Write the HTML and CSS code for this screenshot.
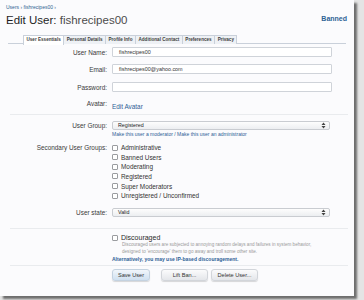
FILE: index.html
```html
<!DOCTYPE html>
<html>
<head>
<meta charset="utf-8">
<link rel="stylesheet" href="styles.css">
</head>
<body>
<div class="page">
  <div class="crumbs"><a>Users</a> › <a>fishrecipes00</a> ›</div>
  <div class="titlebar">
    <h1>Edit User: <span class="uname">fishrecipes00</span></h1>
    <a class="banned">Banned</a>
  </div>
  <div class="tabs">
    <span class="tab active">User Essentials</span>
    <span class="tab">Personal Details</span>
    <span class="tab">Profile Info</span>
    <span class="tab">Additional Contact</span>
    <span class="tab">Preferences</span>
    <span class="tab">Privacy</span>
  </div>

  <div class="form">
    <div class="row r-input"><label class="lbl">User Name:</label><div class="ctrl"><div class="input">fishrecipes00</div></div></div>
    <div class="row r-input"><label class="lbl">Email:</label><div class="ctrl"><div class="input">fishrecipes00@yahoo.com</div></div></div>
    <div class="row r-input"><label class="lbl">Password:</label><div class="ctrl"><div class="input"></div></div></div>
    <div class="row r-avatar"><label class="lbl">Avatar:</label><div class="ctrl"><a class="link big">Edit Avatar</a></div></div>
    <hr class="sep sep1">
    <div class="row r-group"><label class="lbl">User Group:</label>
      <div class="ctrl">
        <div class="select">Registered<svg class="arr" width="5" height="7" viewBox="0 0 5 7"><path d="M2.5 0.5 L4.5 3 L0.5 3 Z M2.5 6.5 L4.5 4 L0.5 4 Z" fill="#444"/></svg></div>
        <a class="link small mk">Make this user a moderator / Make this user an administrator</a>
      </div>
    </div>
    <div class="row r-sec"><label class="lbl">Secondary User Groups:</label>
      <div class="ctrl checks">
        <div class="chk"><span class="box"></span>Administrative</div>
        <div class="chk"><span class="box"></span>Banned Users</div>
        <div class="chk"><span class="box"></span>Moderating</div>
        <div class="chk"><span class="box"></span>Registered</div>
        <div class="chk"><span class="box"></span>Super Moderators</div>
        <div class="chk"><span class="box"></span>Unregistered / Unconfirmed</div>
      </div>
    </div>
    <div class="row r-state"><label class="lbl">User state:</label>
      <div class="ctrl"><div class="select">Valid<svg class="arr" width="5" height="7" viewBox="0 0 5 7"><path d="M2.5 0.5 L4.5 3 L0.5 3 Z M2.5 6.5 L4.5 4 L0.5 4 Z" fill="#444"/></svg></div></div>
    </div>
    <hr class="sep sep2">
    <div class="row r-disc"><span class="lbl"></span>
      <div class="ctrl">
        <div class="chk disc"><span class="box"></span>Discouraged</div>
        <p class="desc">Discouraged users are subjected to annoying random delays and failures in system behavior,<br>designed to 'encourage' them to go away and troll some other site.</p>
        <a class="link small alt">Alternatively, you may use IP-based discouragement.</a>
      </div>
    </div>
    <hr class="sep sep3">
    <div class="row r-btn"><span class="lbl"></span>
      <div class="ctrl buttons">
        <span class="btn primary">Save User</span>
        <span class="btn lift">Lift Ban...</span>
        <span class="btn del">Delete User...</span>
      </div>
    </div>
  </div>
</div>
</body>
</html>
```

FILE: styles.css
```css
* { box-sizing: border-box; }
html, body { margin: 0; padding: 0; }
body {
  background: #e4e4e4;
  font-family: "Liberation Sans", Arial, sans-serif;
  color: #333;
  width: 364px;
  height: 300px;
  overflow: hidden;
}
.page {
  width: 354px;
  height: 296px;
  background: #fbfbfd;
  box-shadow: 3px 3px 2px #6e6e6e;
  padding: 4px 0 0 0;
}
a { color: #2e5f91; text-decoration: none; }
.crumbs {
  font-size: 5px;
  color: #4a6a90;
  padding-left: 6px;
  height: 6px;
  line-height: 6px;
}
.titlebar {
  display: flex;
  justify-content: space-between;
  align-items: center;
  padding: 0 7px 0 6px;
  height: 17px;
  margin-top: 1px;
}
h1 {
  margin: 0;
  font-size: 11.5px;
  font-weight: normal;
  color: #1f1f1f;
  line-height: 14px;
}
.uname { color: #4c4c4c; }
.banned {
  font-size: 7px;
  font-weight: bold;
  color: #2f6395;
  margin-top: -3px;
}
.tabs {
  display: flex;
  margin: 7px 8px 0 8px;
  padding-left: 15px;
  border-bottom: 1px solid #c9d0da;
  height: 9px;
}
.tab {
  font-size: 4.6px;
  font-weight: bold;
  color: #3d3d3d;
  padding: 0 2.5px;
  height: 9px;
  line-height: 8px;
  background: #eef1f5;
  border: 1px solid #c9d0da;
  border-left: none;
  border-bottom: none;
  white-space: nowrap;
}
.tab:first-child { border-left: 1px solid #c9d0da; }
.tab.active { background: #fff; height: 10px; }

.form { margin-top: 3px; }
.row {
  display: grid;
  grid-template-columns: 107px 220px;
  column-gap: 5px;
}
.lbl {
  text-align: right;
  font-size: 6.4px;
  color: #3a3a3a;
}
.r-input { height: 17.3px; align-items: start; }
.r-input .lbl { line-height: 11px; }
.input {
  height: 10px;
  background: #fff;
  border: 1px solid #cfd3d9;
  border-radius: 1px;
  font-size: 5.4px;
  line-height: 8px;
  padding-left: 6px;
  color: #333;
}
.r-avatar { height: 12px; }
.r-avatar .lbl, .r-avatar .ctrl { line-height: 9px; }
.link.big { font-size: 6.4px; color: #2e6196; }
.sep {
  border: none;
  border-top: 1px solid #e9ebee;
  margin: 0 6px 0 10px;
  height: 0;
}
.sep1 { margin-top: 3px; margin-bottom: 6px; }
.r-group { margin-top: 1px; }
.r-group .lbl { line-height: 10px; }
.select {
  position: relative;
  width: 218px;
  height: 9px;
  background: linear-gradient(#fdfdfd, #eceef1);
  border: 1px solid #c9ccd1;
  border-radius: 2px;
  font-size: 5.3px;
  line-height: 7px;
  padding-left: 5px;
  color: #222;
}
.arr { position: absolute; right: 3px; top: 0; }
.link.small { font-size: 5px; color: #2e6196; display: block; }
.mk { line-height: 9px; margin-top: 0px; }
.r-sec { margin-top: 4px; }
.r-sec .lbl { line-height: 9px; }
.checks { display: flex; flex-direction: column; }
.chk {
  display: flex;
  align-items: center;
  font-size: 6.4px;
  color: #333;
  height: 9.6px;
}
.box {
  width: 6px;
  height: 6px;
  border: 1px solid #9a9ca0;
  border-radius: 1px;
  background: #fff;
  margin-right: 3px;
}
.r-state { margin-top: 8px; }
.r-state .lbl { line-height: 10px; }
.sep2 { margin-top: 10px; margin-bottom: 4px; }
.disc { font-size: 7px; color: #2a2a2a; height: 9px; }
.desc {
  margin: 0 0 0 10px;
  font-size: 4.6px;
  line-height: 6.5px;
  color: #9a9a9a;
}
.alt { font-size: 5px; font-weight: bold; line-height: 8px; margin-top: 0; }
.sep3 { margin-top: 2px; margin-bottom: 3px; }
.buttons { display: flex; gap: 3px; }
.btn {
  height: 12px;
  font-size: 5.6px;
  line-height: 11px;
  text-align: center;
  padding: 0;
  background: linear-gradient(#fbfbfc, #e4e6ea);
  border: 1px solid #d2d5da;
  border-radius: 3px;
  box-shadow: 0 1px 1px rgba(0,0,0,.15);
  color: #333;
  white-space: nowrap;
}
.btn.primary {
  width: 38px;
  background: linear-gradient(#f1f6fb, #cfe0f0);
  border-color: #c4d2e0;
}
.btn.lift { margin-left: 8px; width: 47px; }
.btn.del { width: 47px; }
```
